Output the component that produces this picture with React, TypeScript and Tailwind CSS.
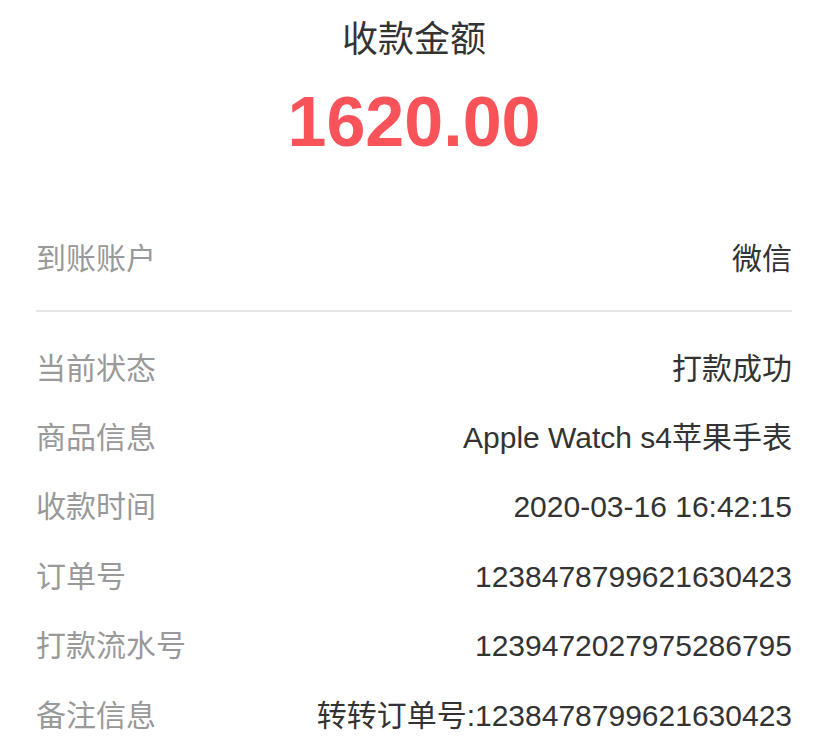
import React from "react";

const rows: [string, string][] = [
  ["当前状态", "打款成功"],
  ["商品信息", "Apple Watch s4苹果手表"],
  ["收款时间", "2020-03-16 16:42:15"],
  ["订单号", "1238478799621630423"],
  ["打款流水号", "1239472027975286795"],
  ["备注信息", "转转订单号:1238478799621630423"],
];

export default function App() {
  return (
    <div
      className="w-[828px] h-[756px] bg-white overflow-hidden"
      style={{ fontFamily: '"Liberation Sans", "Noto Sans CJK SC", sans-serif' }}
    >
      <div className="h-[80px] flex items-center justify-center text-[36px] leading-none text-[#333333]">
        收款金额
      </div>
      <div className="h-[84px] flex items-center justify-center text-[70px] leading-none font-bold text-[#f9535a]">
        1620.00
      </div>
      <div className="px-[36px] pt-[60px]">
        <div className="h-[70px] flex items-center justify-between text-[30px] leading-none">
          <span className="text-[#999999]">到账账户</span>
          <span className="text-[#333333]">微信</span>
        </div>
        <div className="mt-[16px] h-[2px] bg-[#e6e6e6]" />
        <div className="pt-[22px]">
          {rows.map(([k, v]) => (
            <div
              key={k}
              className="h-[69.4px] flex items-center justify-between text-[30px] leading-none"
            >
              <span className="text-[#999999]">{k}</span>
              <span className="text-[#333333]">{v}</span>
            </div>
          ))}
        </div>
      </div>
    </div>
  );
}
